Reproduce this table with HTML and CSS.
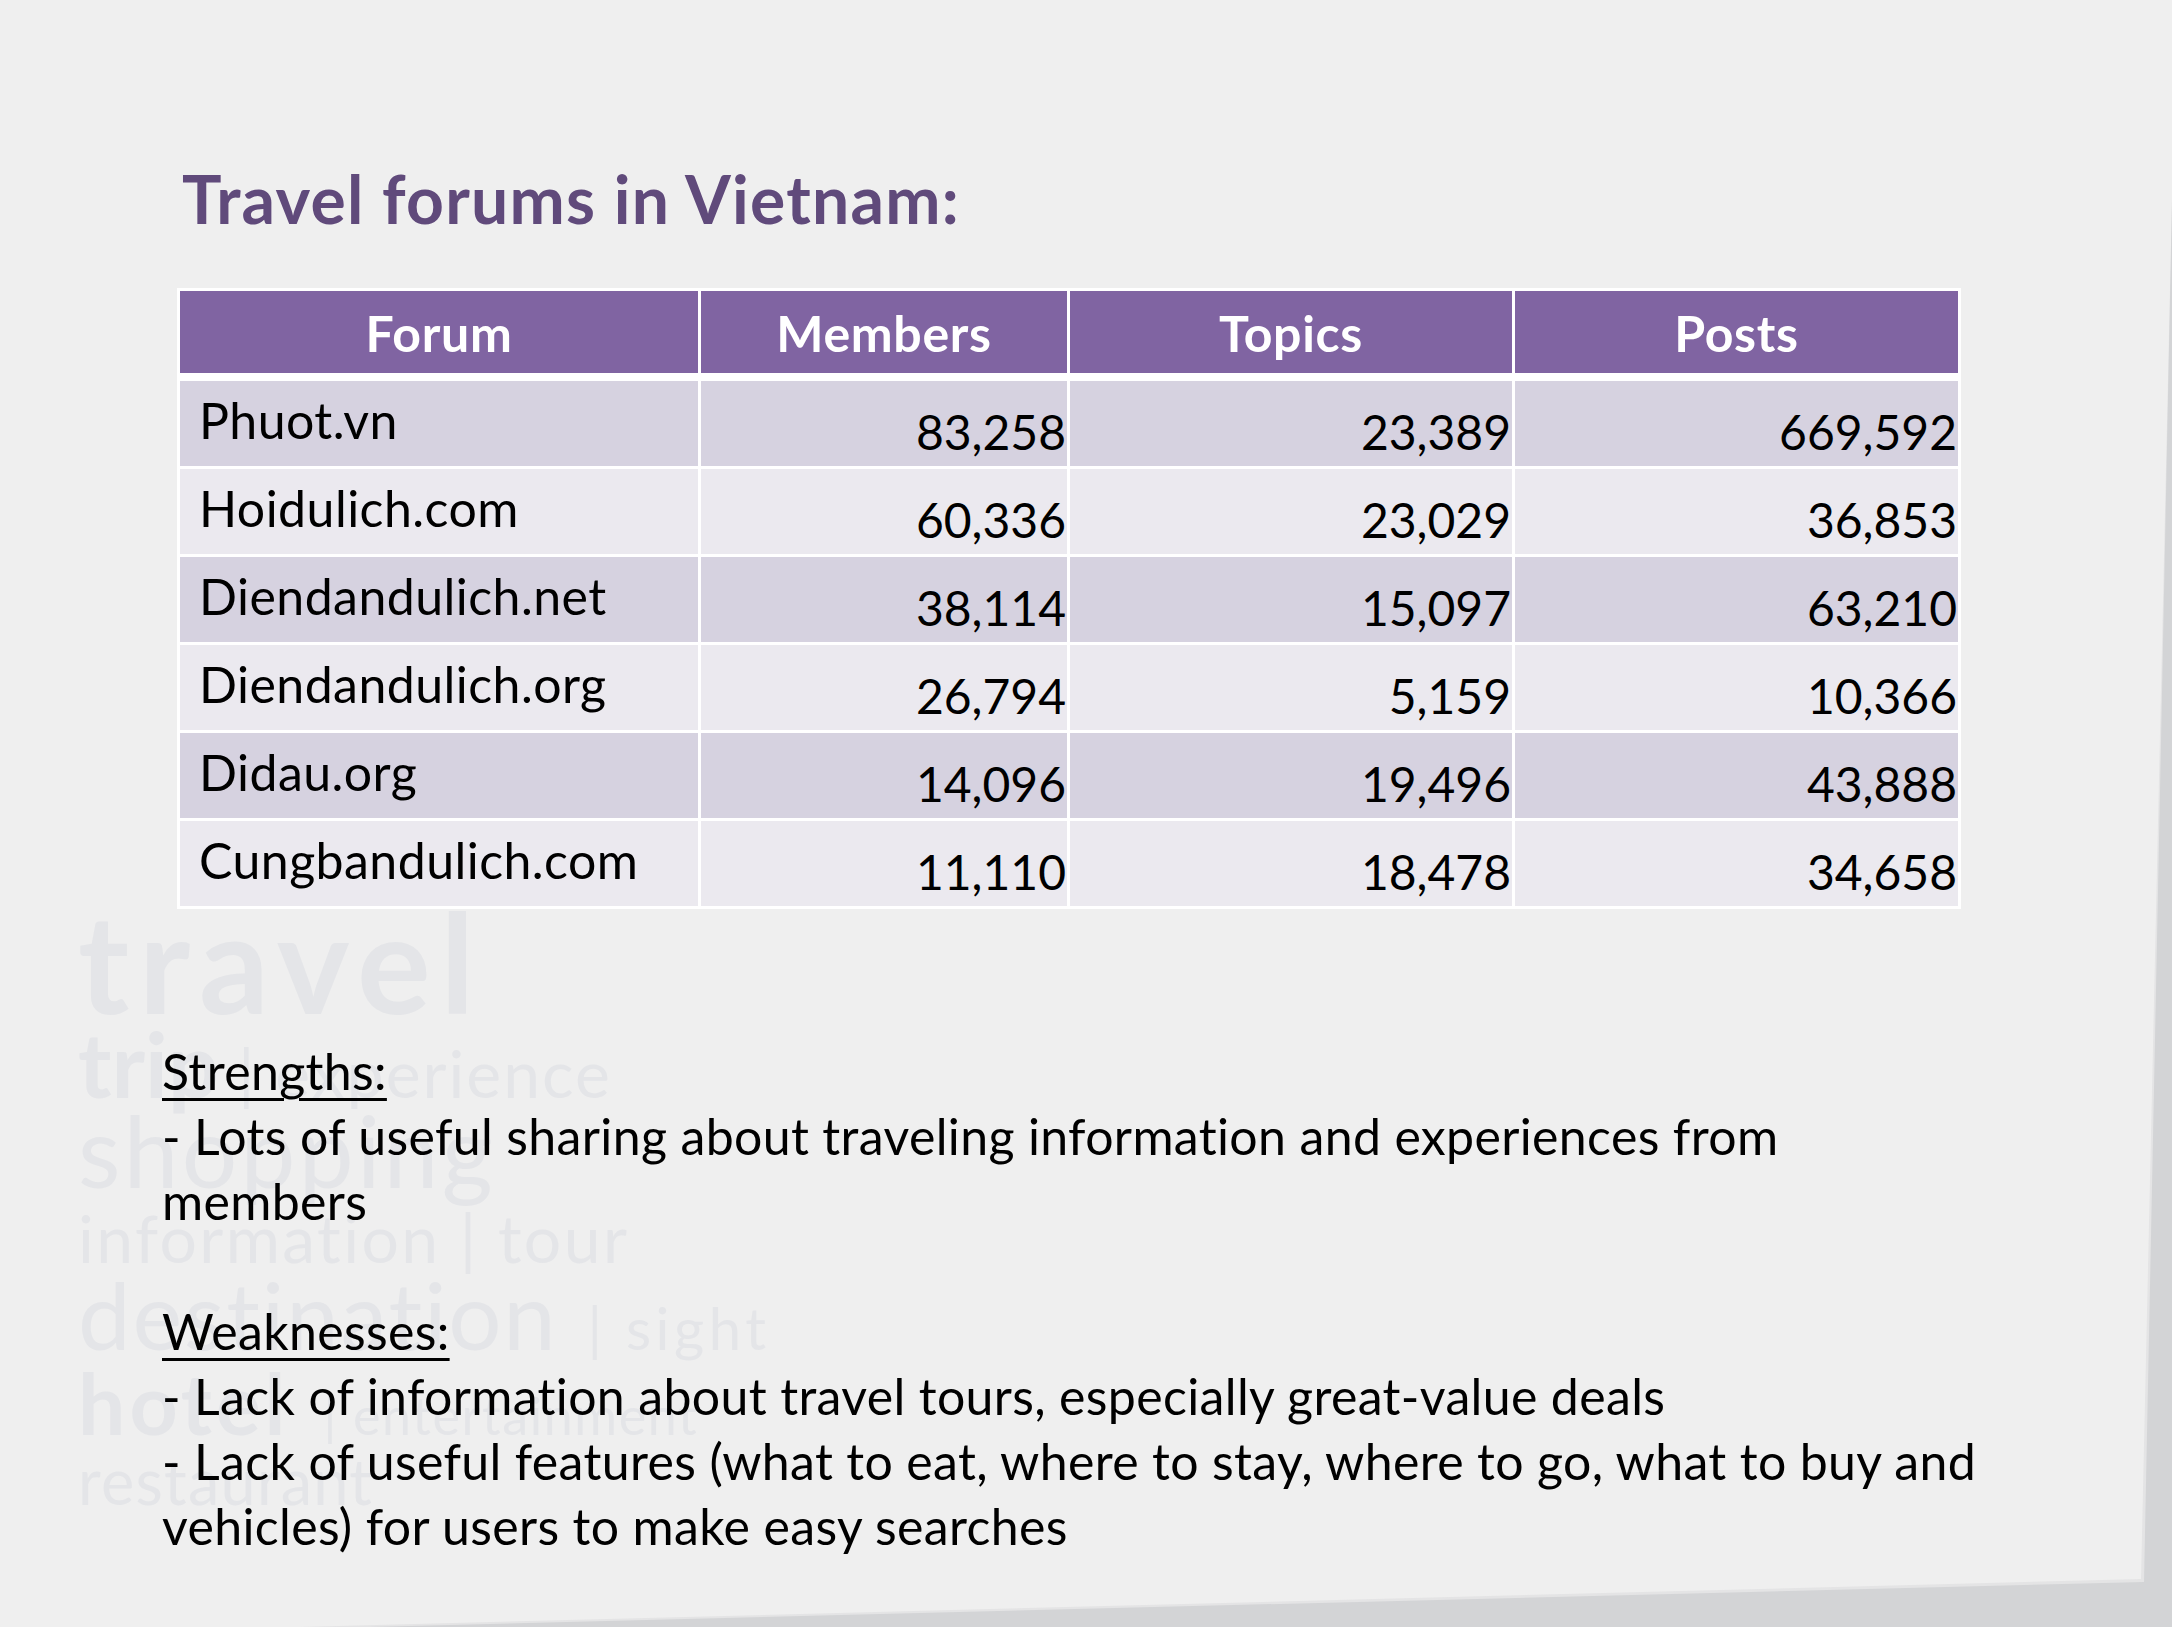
FILE: index.html
```html
<!DOCTYPE html>
<html lang="en">
<head>
<meta charset="utf-8">
<title>Travel forums in Vietnam</title>
<link rel="stylesheet" href="styles.css">
</head>
<body>
<div class="edge">
  <main class="slide">
    <div class="watermark" aria-hidden="true">
      <div class="wm wm1"><b>travel</b></div>
      <div class="wm wm2"><b>trip</b><span class="sm2"> | experience</span></div>
      <div class="wm wm3">shopping</div>
      <div class="wm wm4">information | tour</div>
      <div class="wm wm5">destination<span class="sm5">| sight</span></div>
      <div class="wm wm6"><b>hotel</b><span class="sm6">| entertainment</span></div>
      <div class="wm wm7">restaurant</div>
    </div>

    <h1 class="title">Travel forums in Vietnam:</h1>

    <table class="forums">
      <colgroup>
        <col class="c-forum">
        <col class="c-members">
        <col class="c-topics">
        <col class="c-posts">
      </colgroup>
      <thead>
        <tr><th>Forum</th><th>Members</th><th>Topics</th><th>Posts</th></tr>
      </thead>
      <tbody>
        <tr><td class="name">Phuot.vn</td><td class="num">83,258</td><td class="num">23,389</td><td class="num">669,592</td></tr>
        <tr><td class="name">Hoidulich.com</td><td class="num">60,336</td><td class="num">23,029</td><td class="num">36,853</td></tr>
        <tr><td class="name">Diendandulich.net</td><td class="num">38,114</td><td class="num">15,097</td><td class="num">63,210</td></tr>
        <tr><td class="name">Diendandulich.org</td><td class="num">26,794</td><td class="num">5,159</td><td class="num">10,366</td></tr>
        <tr><td class="name">Didau.org</td><td class="num">14,096</td><td class="num">19,496</td><td class="num">43,888</td></tr>
        <tr><td class="name">Cungbandulich.com</td><td class="num">11,110</td><td class="num">18,478</td><td class="num">34,658</td></tr>
      </tbody>
    </table>

    <section class="notes">
      <p class="label"><u>Strengths:</u></p>
      <p>- Lots of useful sharing about traveling information and experiences from<br>members</p>
      <p class="label spaced"><u>Weaknesses:</u></p>
      <p>- Lack of information about travel tours, especially great-value deals</p>
      <p>- Lack of useful features (what to eat, where to stay, where to go, what to buy and<br>vehicles) for users to make easy searches</p>
    </section>
  </main>
</div>
</body>
</html>
```
FILE: styles.css
```css
* { box-sizing: border-box; }

html, body {
  margin: 0;
  padding: 0;
}

body {
  width: 2172px;
  height: 1627px;
  overflow: hidden;
  background: #d3d4d6;
  font-family: Lato, "Open Sans", "Liberation Sans", sans-serif;
}

.edge {
  width: 2172px;
  height: 1627px;
  background: #e4e4e5;
  clip-path: polygon(0 0, 2172px 0, 2172px 198px, 2144px 1582px, 290px 1629px, 0 1629px);
}

.slide {
  position: relative;
  width: 2172px;
  height: 1627px;
  background: #efefef;
  clip-path: polygon(0 0, 2172px 0, 2172px 200px, 2141px 1579px, 300px 1627px, 0 1627px);
  padding-top: 160px;
  display: flex;
  flex-direction: column;
  align-items: flex-start;
}

/* faint background word cloud */
.watermark {
  position: absolute;
  left: 78px;
  top: 914px;
  z-index: -1;
  color: #e4e5e8;
  white-space: nowrap;
}
.wm b { font-weight: 700; }
.wm1 { font-size: 138px; height: 93px; line-height: 93px; letter-spacing: 9.5px; }
.wm2 { font-size: 90px; height: 112px; line-height: 112px; }
.wm2 .sm2 { font-size: 66px; letter-spacing: 2px; }
.wm3 { font-size: 98px; height: 62px; line-height: 62px; letter-spacing: 3.3px; }
.wm4 { font-size: 66px; height: 113px; line-height: 113px; letter-spacing: 2.4px; }
.wm5 { font-size: 94px; height: 39px; line-height: 39px; letter-spacing: 1.8px; }
.wm5 .sm5 { font-size: 58px; letter-spacing: 4.5px; padding-left: 30px; }
.wm6 { font-size: 84px; height: 139px; line-height: 139px; letter-spacing: 4px; }
.wm6 .sm6 { font-size: 52px; letter-spacing: 1.6px; padding-left: 34px; }
.wm7 { font-size: 63px; height: 18px; line-height: 18px; letter-spacing: 1.3px; }

.title {
  margin: 0 0 0 182px;
  font-size: 66px;
  line-height: 77px;
  font-weight: 700;
  letter-spacing: 1.25px;
  color: #604a7b;
}

.forums {
  margin: 51px 0 0 177px;
  width: 1784px;
  table-layout: fixed;
  border-collapse: separate;
  border-spacing: 3px;
  background: #ffffff;
  font-size: 48px;
  line-height: 58px;
  color: #000;
}
.c-forum { width: 518px; }
.c-members { width: 366px; }
.c-topics { width: 442px; }
.c-posts { width: 443px; }

.forums th {
  background: #8064a2;
  color: #ffffff;
  font-size: 50px;
  font-weight: 700;
  letter-spacing: 0.7px;
  text-align: center;
  padding: 13px 0 11px;
  border-bottom: 5px solid #ffffff;
}

.forums tbody tr { height: 85px; }
.forums tbody tr:nth-child(odd) td { background: #d6d2e0; }
.forums tbody tr:nth-child(even) td { background: #ebe9ef; }

.forums td.name {
  vertical-align: top;
  font-size: 50px;
  letter-spacing: 0.45px;
  padding: 10px 0 0 19px;
}
.forums td.num {
  vertical-align: bottom;
  text-align: right;
  padding: 0 1px 5px 0;
}

.notes {
  position: relative;
  margin: 130px 0 0 162px;
  font-size: 50px;
  line-height: 65px;
  letter-spacing: 0.35px;
  color: #000;
  white-space: nowrap;
}
.notes p { margin: 0; }
.notes .spaced { margin-top: 65px; }
.notes u {
  text-decoration: underline;
  text-decoration-thickness: 3px;
  text-underline-offset: 8px;
}
```
